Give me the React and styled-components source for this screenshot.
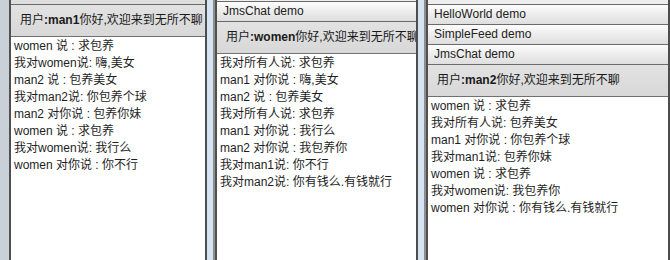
import styled, {createGlobalStyle} from "styled-components";

const GlobalStyle = createGlobalStyle`
  html, body {
    margin: 0;
    padding: 0;
    overflow: hidden;
  }
  body {
    font-family: "Liberation Sans", "Noto Sans CJK SC", sans-serif;
  }
`

const Desktop = styled.div`
  display: flex;
  gap: 6px;
  width: 670px;
  height: 260px;
  overflow: hidden;
  background: #d5e3f2;
`

const Window = styled.div`
  display: flex;
  flex: ${p => p.$grow ? "1 0 auto" : "none"};
  width: ${p => p.$width}px;
  border-left: ${p => p.$edge}px solid ${p => p.$edgeColor};
  border-right: 2px solid #4d4d4d;
  box-sizing: border-box;
`

const Viewport = styled.div`
  flex: 1;
  min-width: 0;
  display: flex;
  flex-direction: column;
  overflow: hidden;
  padding-top: ${p => p.$top}px;
  border-left: 2px solid #505050;
  background: #eeeeee;
`

const TabList = styled.div`
  display: flex;
  flex-direction: column;
  border-top: ${p => p.$topLine ? "1px solid #6a6a6a" : "none"};
`

const Tab = styled.div`
  height: ${p => p.$height || 19}px;
  line-height: 19px;
  padding-left: 6px;
  font-size: 12px;
  color: #222;
  white-space: nowrap;
  overflow: hidden;
  background: ${p => p.$height
    ? "#dedede"
    : "linear-gradient(#fdfdfd, #eeeeee 45%, #dedede)"};
  border-bottom: 1px solid #6a6a6a;
`

const Greeting = styled.div`
  height: 31px;
  line-height: 31px;
  padding-left: 9px;
  font-size: 12px;
  color: #1a1a1a;
  white-space: nowrap;
  overflow: hidden;
  background: linear-gradient(#e2e2e2, #d8d8d8);
  border-bottom: 1px solid #707070;

  b {
    font-weight: bold;
  }
`

const Messages = styled.div`
  flex: 1;
  background: #fff;
  padding: 1px 0 0 3px;
`

const Line = styled.div`
  height: 17px;
  line-height: 17px;
  font-size: 12px;
  color: #1e1e1e;
  white-space: nowrap;
`

const windows = [
    {
        user: "man1", width: 207, edge: 9, edgeColor: "#c9d0d8", top: 0, topLine: false,
        tabs: [{label: "", height: 4}],
        lines: [
            "women 说 : 求包养",
            "我对women说: 嗨,美女",
            "man2 说 : 包养美女",
            "我对man2说: 你包养个球",
            "man2 对你说 : 包养你妹",
            "women 说 : 求包养",
            "我对women说: 我行么",
            "women 对你说 : 你不行",
        ],
    },
    {
        user: "women", width: 205, edge: 2, edgeColor: "#8e8e8e", top: 1, topLine: true,
        tabs: [{label: "JmsChat demo"}],
        lines: [
            "我对所有人说: 求包养",
            "man1 对你说 : 嗨,美女",
            "man2 说 : 包养美女",
            "我对所有人说: 求包养",
            "man1 对你说 : 我行么",
            "man2 对你说 : 我包养你",
            "我对man1说: 你不行",
            "我对man2说: 你有钱么.有钱就行",
        ],
    },
    {
        user: "man2", width: 246, edge: 2, edgeColor: "#8e8e8e", top: 4, topLine: true, grow: true,
        tabs: [{label: "HelloWorld demo"}, {label: "SimpleFeed demo"}, {label: "JmsChat demo"}],
        lines: [
            "women 说 : 求包养",
            "我对所有人说: 包养美女",
            "man1 对你说 : 你包养个球",
            "我对man1说: 包养你妹",
            "women 说 : 求包养",
            "我对women说: 我包养你",
            "women 对你说 : 你有钱么.有钱就行",
        ],
    },
]

const ChatWindow = ({user, width, edge, edgeColor, top, topLine, grow, tabs, lines}) => {
    return <Window $width={width} $edge={edge} $edgeColor={edgeColor} $grow={grow}>
        <Viewport $top={top}>
            <TabList $topLine={topLine}>
                {tabs.map((t, i) => <Tab key={i} $height={t.height}>{t.label}</Tab>)}
            </TabList>
            <Greeting>用户<b>:{user}</b>你好,欢迎来到无所不聊</Greeting>
            <Messages>
                {lines.map((l, i) => <Line key={i}>{l}</Line>)}
            </Messages>
        </Viewport>
    </Window>
}

export default function App() {
    return <>
        <GlobalStyle/>
        <Desktop>
            {windows.map(w => <ChatWindow key={w.user} {...w}/>)}
        </Desktop>
    </>
}
